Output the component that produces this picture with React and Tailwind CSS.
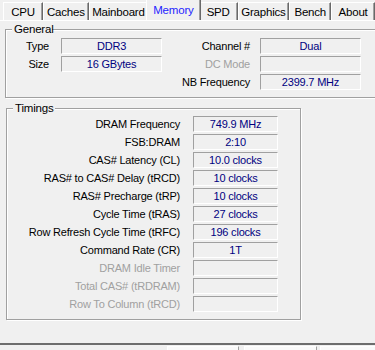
import React from "react";

const font = { fontFamily: '"Liberation Sans", Arial, sans-serif' };

function Val({ children, w }) {
  return (
    <div
      className={`${w} h-[16px] border border-t-[#a0a0a0] border-l-[#a0a0a0] border-b-white border-r-white flex items-center justify-center text-[11px] leading-[14px] text-[#000080] tracking-[-0.2px] whitespace-nowrap`}
    >
      {children}
    </div>
  );
}

function Tab({ label, w, active }) {
  if (active) {
    return (
      <div
        className={`${w} h-[21px] -mx-[2px] relative z-10 bg-[#f0f0f0] border-l border-t border-l-white border-t-white border-r border-r-[#696969] shadow-[inset_-1px_0_0_#a0a0a0] flex items-center justify-center pb-[1px] text-[11.5px] leading-[14px] text-[#1f1fff]`}
      >
        {label}
      </div>
    );
  }
  return (
    <div
      className={`${w} h-[18px] bg-[#f0f0f0] border-l border-t border-l-white border-t-white border-r border-r-[#696969] shadow-[inset_-1px_0_0_#a0a0a0] flex items-center justify-center pt-[1px] text-[11.5px] leading-[14px] text-black`}
    >
      {label}
    </div>
  );
}

function Group({ title, className, titleW, children }) {
  return (
    <div
      className={`relative border border-[#a0a0a0] shadow-[inset_1px_1px_0_#ffffff,1px_1px_0_#ffffff] ${className}`}
    >
      <div
        className={`absolute -top-[8px] left-[6px] ${titleW} bg-[#f0f0f0] px-[2px] text-[11.5px] leading-[14px] text-black`}
      >
        {title}
      </div>
      {children}
    </div>
  );
}

export default function App() {
  const timings = [
    ["DRAM Frequency", "749.9 MHz"],
    ["FSB:DRAM", "2:10"],
    ["CAS# Latency (CL)", "10.0 clocks"],
    ["RAS# to CAS# Delay (tRCD)", "10 clocks"],
    ["RAS# Precharge (tRP)", "10 clocks"],
    ["Cycle Time (tRAS)", "27 clocks"],
    ["Row Refresh Cycle Time (tRFC)", "196 clocks"],
    ["Command Rate (CR)", "1T"],
    ["DRAM Idle Timer", "", true],
    ["Total CAS# (tRDRAM)", "", true],
    ["Row To Column (tRCD)", "", true],
  ];
  return (
    <div
      className="w-[375px] h-[350px] bg-[#f0f0f0] overflow-hidden flex flex-col text-[11px] leading-[16px] tracking-[-0.2px]"
      style={font}
    >
      {/* Tabs */}
      <div className="h-[20px] flex items-end pl-[3px] shrink-0">
        <Tab label="CPU" w="w-[41px]" />
        <Tab label="Caches" w="w-[47px]" />
        <Tab label="Mainboard" w="w-[61px]" />
        <Tab label="Memory" w="w-[56px]" active />
        <Tab label="SPD" w="w-[40px]" />
        <Tab label="Graphics" w="w-[53px]" />
        <Tab label="Bench" w="w-[43px]" />
        <Tab label="About" w="w-[45px]" />
      </div>
      {/* Panel */}
      <div className="flex-1 border-t border-t-white flex flex-col relative">
        <Group
          title="General"
          titleW="w-[40px]"
          className="mt-[8px] ml-[5px] mr-[-12px] h-[69px]"
        >
          <div className="flex pt-[8px]">
            <div className="flex flex-col gap-[2px]">
              {[
                ["Type", "DDR3"],
                ["Size", "16 GBytes"],
              ].map(([l, v]) => (
                <div key={l} className="flex items-center h-[16px]">
                  <div className="w-[43px] text-right">{l}</div>
                  <div className="w-[12px]" />
                  <Val w="w-[101px]">{v}</Val>
                </div>
              ))}
            </div>
            <div className="flex flex-col gap-[2px]">
              {[
                ["Channel #", "Dual"],
                ["DC Mode", "", true],
                ["NB Frequency", "2399.7 MHz"],
              ].map(([l, v, d]) => (
                <div key={l} className="flex items-center h-[16px]">
                  <div
                    className={`w-[89px] text-right pr-[1px] ${d ? "text-[#a0a0a0]" : "text-black"}`}
                  >
                    {l}
                  </div>
                  <div className="w-[9px]" />
                  <Val w="w-[101px]">{v}</Val>
                </div>
              ))}
            </div>
          </div>
        </Group>

        <Group
          title="Timings"
          titleW="w-[42px]"
          className="mt-[10px] ml-[6px] w-[295px] h-[212px]"
        >
          <div className="flex flex-col gap-[2px] pt-[7px]">
            {timings.map(([l, v, d]) => (
              <div key={l} className="flex items-center h-[16px]">
                <div
                  className={`w-[173px] text-right whitespace-nowrap ${d ? "text-[#a0a0a0]" : "text-black"}`}
                >
                  {l}
                </div>
                <div className="w-[13px]" />
                <Val w="w-[85px]">{v}</Val>
              </div>
            ))}
          </div>
        </Group>

        <div className="mt-auto h-[7px] border-t-2 border-t-[#6d6d6d] flex items-start pt-[1px] shrink-0">
          <div className="w-[167px] h-full" />
          <div className="w-[72px] h-full border-t border-l border-t-white border-l-white border-r border-r-[#a0a0a0] bg-[#fafafa]" />
          <div className="w-[5px]" />
          <div className="w-[73px] h-full border-t border-l border-t-white border-l-white border-r border-r-[#a0a0a0] bg-[#fafafa]" />
          <div className="w-[3px]" />
          <div className="flex-1 h-full border-t border-l border-t-white border-l-white bg-[#fafafa]" />
        </div>
      </div>
    </div>
  );
}
